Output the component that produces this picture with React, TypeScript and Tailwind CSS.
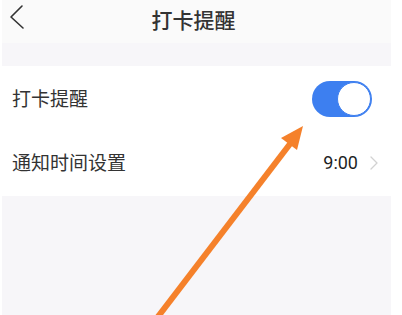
export default function App() {
  const font = { fontFamily: '"Noto Sans CJK SC", "Noto Sans", sans-serif' };
  return (
    <div className="relative h-[315px] w-[402px] overflow-hidden bg-white" style={font}>
      <div className="ml-[2px] flex h-full w-[389px] flex-col bg-[#f7f6f9]">
        <div className="relative flex h-[43px] items-center justify-center bg-[#fafafa]">
          <svg className="absolute left-[5px] top-[4px]" width="18" height="26" viewBox="0 0 18 26" fill="none">
            <polyline points="15,2 4,13 16,24" stroke="#333" strokeWidth="1.6" strokeLinecap="round" strokeLinejoin="round" />
          </svg>
          <span className="-ml-[6px] -mt-[3px] text-[21px] font-medium text-[#333]">打卡提醒</span>
        </div>
        <div className="h-[23px]" />
        <div className="bg-white">
          <div className="flex h-[65px] items-center justify-between pl-[10px] pr-[19px]">
            <span className="text-[19px] text-[#333]">打卡提醒</span>
            <div className="flex h-[36px] w-[60px] items-center justify-end rounded-full bg-[#3d7ff0] pr-[1px]">
              <div className="h-[34px] w-[34px] rounded-full border border-[#3d7ff0] bg-white" />
            </div>
          </div>
          <div className="flex h-[65px] items-center justify-between pl-[10px] pr-[13px]">
            <span className="-mt-[2px] text-[19px] text-[#333]">通知时间设置</span>
            <div className="-mt-[2px] flex items-center gap-[12px]">
              <span className="font-['Roboto',sans-serif] text-[18px] font-normal text-[#1f1f1f]">9:00</span>
              <svg width="8" height="14" viewBox="0 0 8 14" fill="none">
                <polyline points="1,1 7,7 1,13" stroke="#d2d2d2" strokeWidth="1.3" strokeLinecap="round" strokeLinejoin="round" />
              </svg>
            </div>
          </div>
        </div>
        <div className="flex-1" />
      </div>
      <svg className="pointer-events-none absolute left-0 top-0" width="402" height="315" viewBox="0 0 402 315">
        <line x1="157" y1="318" x2="293" y2="140" stroke="#f5812b" strokeWidth="6" />
        <polygon points="303,126 281,138 297,150" fill="#f5812b" />
      </svg>
    </div>
  );
}
